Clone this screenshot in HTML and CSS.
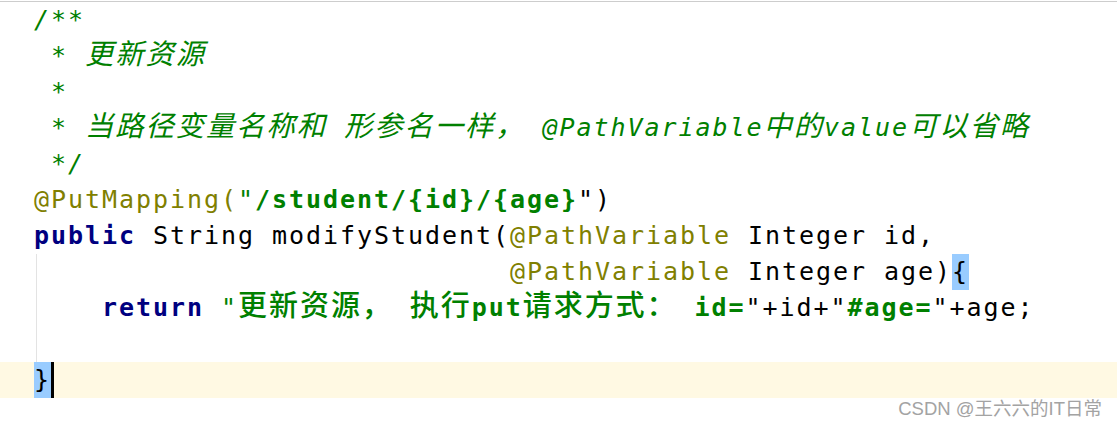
FILE: index.html
```html
<!DOCTYPE html>
<html lang="zh">
<head>
<meta charset="utf-8">
<title>Editor</title>
<link rel="stylesheet" href="styles.css">
</head>
<body>
<div class="editor">
  <div class="line"><span class="cm">/**</span></div>
  <div class="line"><span class="cm"> * <span class="zh">更新资源</span></span></div>
  <div class="line"><span class="cm"> *</span></div>
  <div class="line"><span class="cm"> * <span class="zh">当路径变量名称和</span> <span class="zh">形参名一样，</span> @PathVariable<span class="zh">中的</span>value<span class="zh">可以省略</span></span></div>
  <div class="line"><span class="cm"> */</span></div>
  <div class="line"><span class="an">@PutMapping(</span><span class="q">"</span><span class="st">/student/{id}/{age}</span>")</div>
  <div class="line"><span class="kw">public</span> String modifyStudent(<span class="an">@PathVariable</span> Integer id,</div>
  <div class="guide">
    <div class="line">                            <span class="an">@PathVariable</span> Integer age)<span class="brace">{</span></div>
    <div class="line">    <span class="kw">return</span> <span class="q">"</span><span class="st"><span class="zh">更新资源，</span> <span class="zh">执行</span>put<span class="zh">请求方式：</span> id=</span>"+id+"<span class="st">#age=</span>"+age;</div>
    <div class="line"></div>
  </div>
  <div class="line caret-row"><span class="brace">}</span><span class="caret"></span></div>
</div>
<div class="watermark">CSDN @王六六的IT日常</div>
</body>
</html>
```

FILE: styles.css
```css
html, body {
  margin: 0;
  background: #ffffff;
}

body {
  padding-top: 1px;
  width: 1117px;
  height: 426px;
  overflow: hidden;
  position: relative;
}

.editor {
  border-top: 1px solid #cdcdcd;
  font-family: "DejaVu Sans Mono", "Noto Sans CJK SC", monospace;
  font-size: 25px;
  letter-spacing: 1.95px;
  color: #000000;
}

.line {
  height: 36px;
  line-height: 36px;
  padding-left: 34px;
  white-space: pre;
  overflow: visible;
}

.guide {
  background: linear-gradient(#e3e3e3, #e3e3e3) no-repeat 36px 0 / 1px 100%;
}

.cm {
  color: #008000;
  font-style: italic;
}

.zh {
  line-height: 16px;
  font-family: "Noto Sans CJK SC", sans-serif;
}

.cm .zh {
  font-size: 28.3px;
}

.kw {
  color: #000080;
  font-weight: bold;
}

.an {
  color: #808000;
}

.st {
  color: #008000;
  font-weight: bold;
}

.st .zh {
  font-size: 29px;
  font-weight: 500;
}

.q {
  color: #008000;
}

.brace {
  display: inline-block;
  height: 36px;
  vertical-align: top;
  background: #99ccff;
}

.caret-row {
  background: #fff9e3;
}

.caret {
  display: inline-block;
  width: 3px;
  height: 36px;
  vertical-align: top;
  background: #000000;
}

.watermark {
  position: absolute;
  right: 15px;
  top: 399px;
  font-family: "Liberation Sans", "Noto Sans CJK SC", sans-serif;
  font-size: 18.5px;
  line-height: 20px;
  color: #a3a3a3;
  white-space: nowrap;
}
```
